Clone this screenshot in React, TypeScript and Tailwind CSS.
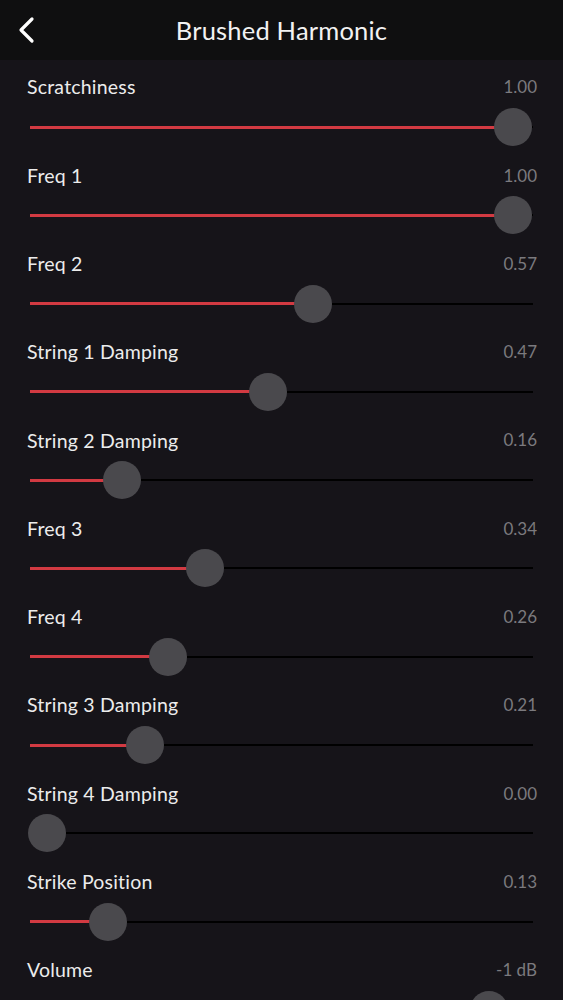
const params = [
  { name: "Scratchiness", value: 1.0, text: "1.00" },
  { name: "Freq 1", value: 1.0, text: "1.00" },
  { name: "Freq 2", value: 0.57, text: "0.57" },
  { name: "String 1 Damping", value: 0.475, text: "0.47" },
  { name: "String 2 Damping", value: 0.16, text: "0.16" },
  { name: "Freq 3", value: 0.34, text: "0.34" },
  { name: "Freq 4", value: 0.26, text: "0.26" },
  { name: "String 3 Damping", value: 0.21, text: "0.21" },
  { name: "String 4 Damping", value: 0.0, text: "0.00" },
  { name: "Strike Position", value: 0.13, text: "0.13" },
  { name: "Volume", value: 0.948, text: "-1 dB" },
];

// track runs 502px; thumb (38px) centre travels 466px of it
function Slider({ value }: { value: number }) {
  const filled = value * 466;
  return (
    <div className="mx-[30px] flex h-[38px] items-center">
      <div className="h-[3px] bg-[#d23a42]" style={{ width: filled }} />
      <div className="-ml-[2px] h-[38px] w-[38px] shrink-0 rounded-full bg-[#4a494d]" />
      <div className="h-[2px] flex-1 bg-black" />
    </div>
  );
}

export default function App() {
  return (
    <div
      className="h-[1000px] w-[563px] overflow-hidden bg-[#161419] text-white"
      style={{ fontFamily: "Lato, 'Noto Sans', sans-serif" }}
    >
      <div className="flex h-[60px] items-center bg-[#0f0f10] px-[16px]">
        <svg width="22" height="28" viewBox="0 0 22 28" fill="none">
          <path d="M16 3 L5 14 L16 25" stroke="white" strokeWidth="3.2" strokeLinecap="round" strokeLinejoin="round" />
        </svg>
        <h1 className="flex-1 pr-[22px] text-center text-[25.5px] tracking-[0.2px] text-[#f2f2f2]">
          Brushed Harmonic
        </h1>
      </div>
      <div className="flex flex-col">
        {params.map((p) => (
          <div key={p.name} className="flex h-[88.3px] shrink-0 flex-col gap-[9px] pt-[15px]">
            <div className="flex h-6 items-center justify-between pl-[27px] pr-[26px]">
              <span className="text-[19.5px] tracking-[0.2px] text-[#ececec]">{p.name}</span>
              <span className="text-[17px] text-[#7b7a7e]">{p.text}</span>
            </div>
            <Slider value={p.value} />
          </div>
        ))}
      </div>
    </div>
  );
}
